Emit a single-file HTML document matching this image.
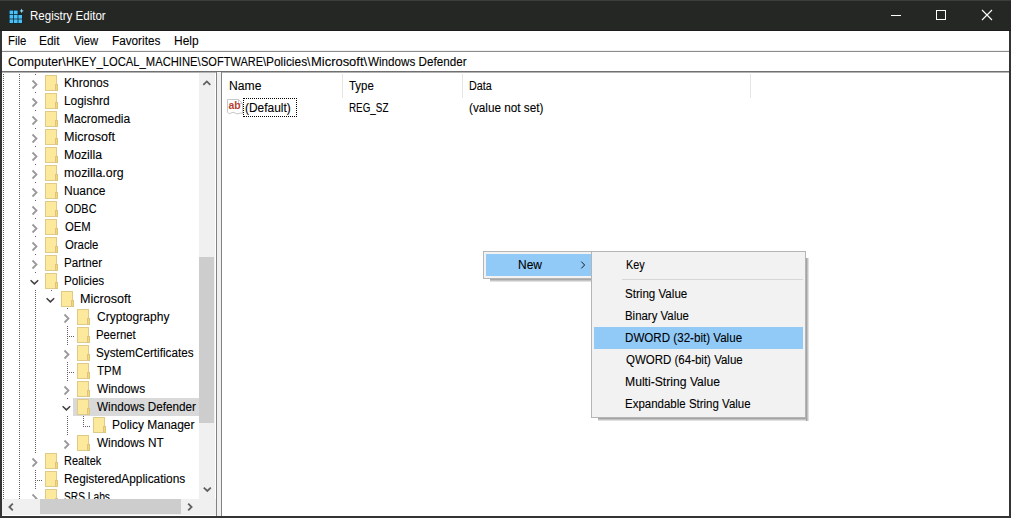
<!DOCTYPE html>
<html><head><meta charset="utf-8"><title>Registry Editor</title>
<style>
html,body{margin:0;padding:0;width:1011px;height:518px;overflow:hidden;background:#fff;font-family:"Liberation Sans",sans-serif;font-size:12.5px;color:#000}
.a{position:absolute}
.t{position:absolute;white-space:pre;line-height:18px;height:18px;-webkit-text-stroke:0.1px currentColor}
</style></head><body>
<div class="a" style="left:0px;top:0px;width:1011px;height:31px;background:#252725;"></div><div class="a" style="left:0px;top:0px;width:1011px;height:1px;background:#3c3d3c;"></div><div class="a" style="left:0px;top:30px;width:1011px;height:1px;background:#1b1c1b;"></div><svg class="a" style="left:8px;top:8px" width="18" height="18" viewBox="0 0 18 18"><rect x="1" y="2" width="13.6" height="13.6" fill="#0b2a3c"/><rect x="1.6" y="2.6" width="3.6" height="3.6" fill="#4cc0f2"/><rect x="6.0" y="2.6" width="3.6" height="3.6" fill="#4cc0f2"/><rect x="1.6" y="7.0" width="3.6" height="3.6" fill="#4cc0f2"/><rect x="6.0" y="7.0" width="3.6" height="3.6" fill="#4cc0f2"/><rect x="10.4" y="7.0" width="3.6" height="3.6" fill="#4cc0f2"/><rect x="1.6" y="11.4" width="3.6" height="3.6" fill="#4cc0f2"/><rect x="6.0" y="11.4" width="3.6" height="3.6" fill="#4cc0f2"/><rect x="10.4" y="11.4" width="3.6" height="3.6" fill="#4cc0f2"/><rect x="10.4" y="1.6" width="4.4" height="4.4" fill="#252725"/><path d="M13.6 0.6 L14.3 2.2 L15.9 2.9 L14.3 3.6 L13.6 5.2 L12.9 3.6 L11.3 2.9 L12.9 2.2 Z" fill="#8fe0ff"/></svg><div class="t" style="left:29.88px;top:7px;color:#fff;transform:scaleX(0.9235);transform-origin:0 0;-webkit-text-stroke:0;">Registry Editor</div><div class="a" style="left:891px;top:15px;width:10px;height:1px;background:#fff;"></div><div class="a" style="left:936px;top:10px;width:8px;height:8px;border:1px solid #fff"></div><svg class="a" style="left:981px;top:9px" width="12" height="12" viewBox="0 0 12 12"><path d="M1 1 L11 11 M11 1 L1 11" stroke="#fff" stroke-width="1.1"/></svg><div class="a" style="left:0px;top:31px;width:2px;height:487px;background:#333433;"></div><div class="a" style="left:1009px;top:31px;width:2px;height:487px;background:#333433;"></div><div class="a" style="left:0px;top:516px;width:1011px;height:2px;background:#333433;"></div><div class="t" style="left:7.79px;top:32px;color:#000;transform:scaleX(0.9105);transform-origin:0 0;">File</div><div class="t" style="left:39.05px;top:32px;color:#000;transform:scaleX(0.9524);transform-origin:0 0;">Edit</div><div class="t" style="left:74.40px;top:32px;color:#000;transform:scaleX(0.9037);transform-origin:0 0;">View</div><div class="t" style="left:112.06px;top:32px;color:#000;transform:scaleX(0.9400);transform-origin:0 0;">Favorites</div><div class="t" style="left:173.64px;top:32px;color:#000;transform:scaleX(0.9560);transform-origin:0 0;">Help</div><div class="a" style="left:2px;top:50px;width:1007px;height:1px;background:#f0f0f0;"></div><div class="a" style="left:2px;top:51px;width:1007px;height:1px;background:#8c8c8c;"></div><div class="t" style="left:7.90px;top:53px;color:#000;transform:scaleX(0.9864);transform-origin:0 0;">Computer\</div><div class="t" style="left:66.40px;top:53px;color:#000;transform:scaleX(0.8973);transform-origin:0 0;">HKEY_LOCAL_MACHINE\</div><div class="t" style="left:200.92px;top:53px;color:#000;transform:scaleX(0.8822);transform-origin:0 0;">SOFTWARE\</div><div class="t" style="left:266.05px;top:53px;color:#000;transform:scaleX(0.9543);transform-origin:0 0;">Policies\</div><div class="t" style="left:311.06px;top:53px;color:#000;transform:scaleX(1.0358);transform-origin:0 0;">Microsoft\</div><div class="t" style="left:367.50px;top:53px;color:#000;transform:scaleX(0.9340);transform-origin:0 0;">Windows Defender</div><div class="a" style="left:2px;top:71px;width:1007px;height:1px;background:#707070;"></div><div class="a" style="left:2px;top:72px;width:1007px;height:1px;background:#b4b4b4;"></div><div class="a" style="left:2px;top:73px;width:197px;height:426px;overflow:hidden"><div class="a" style="left:1px;top:1px;width:1px;height:425px;background:repeating-linear-gradient(#606060 0 1px,transparent 1px 2px)"></div><div class="a" style="left:17px;top:1px;width:1px;height:425px;background:repeating-linear-gradient(#606060 0 1px,transparent 1px 2px)"></div><div class="a" style="left:33px;top:1px;width:1px;height:425px;background:repeating-linear-gradient(#606060 0 1px,transparent 1px 2px)"></div><div class="a" style="left:49px;top:215px;width:1px;height:6px;background:repeating-linear-gradient(#606060 0 1px,transparent 1px 2px)"></div><div class="a" style="left:65px;top:233px;width:1px;height:138px;background:repeating-linear-gradient(#606060 0 1px,transparent 1px 2px)"></div><div class="a" style="left:81px;top:341px;width:1px;height:12px;background:repeating-linear-gradient(#606060 0 1px,transparent 1px 2px)"></div><div class="a" style="left:71px;top:325px;width:126px;height:18px;background:#d9d9d9;"></div><div class="a" style="left:32px;top:2px;width:3px;height:16px;background:#fff;"></div><svg class="a" style="left:29px;top:6px" width="8" height="11" viewBox="0 0 8 11"><path d="M1.5 1.5 L5.5 5.5 L1.5 9.5" fill="none" stroke="#9a9a9a" stroke-width="1.8"/></svg><svg class="a" style="left:43px;top:2px" width="13" height="16" viewBox="0 0 13 16"><rect x="0.5" y="0.5" width="11" height="15" fill="#fde99c" stroke="#e0ca88"/><rect x="10.5" y="9.5" width="2" height="6" fill="#f6d870" stroke="#dcc482"/></svg><div class="t" style="left:61.64px;top:1px;color:#000;transform:scaleX(0.9622);transform-origin:0 0;">Khronos</div><div class="a" style="left:32px;top:20px;width:3px;height:16px;background:#fff;"></div><svg class="a" style="left:29px;top:24px" width="8" height="11" viewBox="0 0 8 11"><path d="M1.5 1.5 L5.5 5.5 L1.5 9.5" fill="none" stroke="#9a9a9a" stroke-width="1.8"/></svg><svg class="a" style="left:43px;top:20px" width="13" height="16" viewBox="0 0 13 16"><rect x="0.5" y="0.5" width="11" height="15" fill="#fde99c" stroke="#e0ca88"/><rect x="10.5" y="9.5" width="2" height="6" fill="#f6d870" stroke="#dcc482"/></svg><div class="t" style="left:61.65px;top:19px;color:#000;transform:scaleX(0.9511);transform-origin:0 0;">Logishrd</div><div class="a" style="left:32px;top:38px;width:3px;height:16px;background:#fff;"></div><svg class="a" style="left:29px;top:42px" width="8" height="11" viewBox="0 0 8 11"><path d="M1.5 1.5 L5.5 5.5 L1.5 9.5" fill="none" stroke="#9a9a9a" stroke-width="1.8"/></svg><svg class="a" style="left:43px;top:38px" width="13" height="16" viewBox="0 0 13 16"><rect x="0.5" y="0.5" width="11" height="15" fill="#fde99c" stroke="#e0ca88"/><rect x="10.5" y="9.5" width="2" height="6" fill="#f6d870" stroke="#dcc482"/></svg><div class="t" style="left:61.64px;top:37px;color:#000;transform:scaleX(0.9632);transform-origin:0 0;">Macromedia</div><div class="a" style="left:32px;top:56px;width:3px;height:16px;background:#fff;"></div><svg class="a" style="left:29px;top:60px" width="8" height="11" viewBox="0 0 8 11"><path d="M1.5 1.5 L5.5 5.5 L1.5 9.5" fill="none" stroke="#9a9a9a" stroke-width="1.8"/></svg><svg class="a" style="left:43px;top:56px" width="13" height="16" viewBox="0 0 13 16"><rect x="0.5" y="0.5" width="11" height="15" fill="#fde99c" stroke="#e0ca88"/><rect x="10.5" y="9.5" width="2" height="6" fill="#f6d870" stroke="#dcc482"/></svg><div class="t" style="left:61.59px;top:55px;color:#000;transform:scaleX(1.0060);transform-origin:0 0;">Microsoft</div><div class="a" style="left:32px;top:74px;width:3px;height:16px;background:#fff;"></div><svg class="a" style="left:29px;top:78px" width="8" height="11" viewBox="0 0 8 11"><path d="M1.5 1.5 L5.5 5.5 L1.5 9.5" fill="none" stroke="#9a9a9a" stroke-width="1.8"/></svg><svg class="a" style="left:43px;top:74px" width="13" height="16" viewBox="0 0 13 16"><rect x="0.5" y="0.5" width="11" height="15" fill="#fde99c" stroke="#e0ca88"/><rect x="10.5" y="9.5" width="2" height="6" fill="#f6d870" stroke="#dcc482"/></svg><div class="t" style="left:61.62px;top:73px;color:#000;transform:scaleX(0.9789);transform-origin:0 0;">Mozilla</div><div class="a" style="left:32px;top:92px;width:3px;height:16px;background:#fff;"></div><svg class="a" style="left:29px;top:96px" width="8" height="11" viewBox="0 0 8 11"><path d="M1.5 1.5 L5.5 5.5 L1.5 9.5" fill="none" stroke="#9a9a9a" stroke-width="1.8"/></svg><svg class="a" style="left:43px;top:92px" width="13" height="16" viewBox="0 0 13 16"><rect x="0.5" y="0.5" width="11" height="15" fill="#fde99c" stroke="#e0ca88"/><rect x="10.5" y="9.5" width="2" height="6" fill="#f6d870" stroke="#dcc482"/></svg><div class="t" style="left:61.61px;top:91px;color:#000;transform:scaleX(0.9864);transform-origin:0 0;">mozilla.org</div><div class="a" style="left:32px;top:110px;width:3px;height:16px;background:#fff;"></div><svg class="a" style="left:29px;top:114px" width="8" height="11" viewBox="0 0 8 11"><path d="M1.5 1.5 L5.5 5.5 L1.5 9.5" fill="none" stroke="#9a9a9a" stroke-width="1.8"/></svg><svg class="a" style="left:43px;top:110px" width="13" height="16" viewBox="0 0 13 16"><rect x="0.5" y="0.5" width="11" height="15" fill="#fde99c" stroke="#e0ca88"/><rect x="10.5" y="9.5" width="2" height="6" fill="#f6d870" stroke="#dcc482"/></svg><div class="t" style="left:61.64px;top:109px;color:#000;transform:scaleX(0.9619);transform-origin:0 0;">Nuance</div><div class="a" style="left:32px;top:128px;width:3px;height:16px;background:#fff;"></div><svg class="a" style="left:29px;top:132px" width="8" height="11" viewBox="0 0 8 11"><path d="M1.5 1.5 L5.5 5.5 L1.5 9.5" fill="none" stroke="#9a9a9a" stroke-width="1.8"/></svg><svg class="a" style="left:43px;top:128px" width="13" height="16" viewBox="0 0 13 16"><rect x="0.5" y="0.5" width="11" height="15" fill="#fde99c" stroke="#e0ca88"/><rect x="10.5" y="9.5" width="2" height="6" fill="#f6d870" stroke="#dcc482"/></svg><div class="t" style="left:62.60px;top:127px;color:#000;transform:scaleX(0.8722);transform-origin:0 0;">ODBC</div><div class="a" style="left:32px;top:146px;width:3px;height:16px;background:#fff;"></div><svg class="a" style="left:29px;top:150px" width="8" height="11" viewBox="0 0 8 11"><path d="M1.5 1.5 L5.5 5.5 L1.5 9.5" fill="none" stroke="#9a9a9a" stroke-width="1.8"/></svg><svg class="a" style="left:43px;top:146px" width="13" height="16" viewBox="0 0 13 16"><rect x="0.5" y="0.5" width="11" height="15" fill="#fde99c" stroke="#e0ca88"/><rect x="10.5" y="9.5" width="2" height="6" fill="#f6d870" stroke="#dcc482"/></svg><div class="t" style="left:62.60px;top:145px;color:#000;transform:scaleX(0.9036);transform-origin:0 0;">OEM</div><div class="a" style="left:32px;top:164px;width:3px;height:16px;background:#fff;"></div><svg class="a" style="left:29px;top:168px" width="8" height="11" viewBox="0 0 8 11"><path d="M1.5 1.5 L5.5 5.5 L1.5 9.5" fill="none" stroke="#9a9a9a" stroke-width="1.8"/></svg><svg class="a" style="left:43px;top:164px" width="13" height="16" viewBox="0 0 13 16"><rect x="0.5" y="0.5" width="11" height="15" fill="#fde99c" stroke="#e0ca88"/><rect x="10.5" y="9.5" width="2" height="6" fill="#f6d870" stroke="#dcc482"/></svg><div class="t" style="left:62.60px;top:163px;color:#000;transform:scaleX(0.9081);transform-origin:0 0;">Oracle</div><div class="a" style="left:32px;top:182px;width:3px;height:16px;background:#fff;"></div><svg class="a" style="left:29px;top:186px" width="8" height="11" viewBox="0 0 8 11"><path d="M1.5 1.5 L5.5 5.5 L1.5 9.5" fill="none" stroke="#9a9a9a" stroke-width="1.8"/></svg><svg class="a" style="left:43px;top:182px" width="13" height="16" viewBox="0 0 13 16"><rect x="0.5" y="0.5" width="11" height="15" fill="#fde99c" stroke="#e0ca88"/><rect x="10.5" y="9.5" width="2" height="6" fill="#f6d870" stroke="#dcc482"/></svg><div class="t" style="left:61.67px;top:181px;color:#000;transform:scaleX(0.9300);transform-origin:0 0;">Partner</div><div class="a" style="left:32px;top:200px;width:3px;height:16px;background:#fff;"></div><svg class="a" style="left:27px;top:205px" width="11" height="8" viewBox="0 0 11 8"><path d="M1.6 2.2 L5.4 5.9 L9.2 2.2" fill="none" stroke="#404040" stroke-width="1.5"/></svg><svg class="a" style="left:43px;top:200px" width="13" height="16" viewBox="0 0 13 16"><rect x="0.5" y="0.5" width="11" height="15" fill="#fde99c" stroke="#e0ca88"/><rect x="10.5" y="9.5" width="2" height="6" fill="#f6d870" stroke="#dcc482"/></svg><div class="t" style="left:61.67px;top:199px;color:#000;transform:scaleX(0.9333);transform-origin:0 0;">Policies</div><div class="a" style="left:48px;top:218px;width:3px;height:16px;background:#fff;"></div><svg class="a" style="left:43px;top:223px" width="11" height="8" viewBox="0 0 11 8"><path d="M1.6 2.2 L5.4 5.9 L9.2 2.2" fill="none" stroke="#404040" stroke-width="1.5"/></svg><svg class="a" style="left:59px;top:218px" width="13" height="16" viewBox="0 0 13 16"><rect x="0.5" y="0.5" width="11" height="15" fill="#fde99c" stroke="#e0ca88"/><rect x="10.5" y="9.5" width="2" height="6" fill="#f6d870" stroke="#dcc482"/></svg><div class="t" style="left:77.59px;top:217px;color:#000;transform:scaleX(1.0080);transform-origin:0 0;">Microsoft</div><div class="a" style="left:64px;top:236px;width:3px;height:16px;background:#fff;"></div><svg class="a" style="left:61px;top:240px" width="8" height="11" viewBox="0 0 8 11"><path d="M1.5 1.5 L5.5 5.5 L1.5 9.5" fill="none" stroke="#9a9a9a" stroke-width="1.8"/></svg><svg class="a" style="left:75px;top:236px" width="13" height="16" viewBox="0 0 13 16"><rect x="0.5" y="0.5" width="11" height="15" fill="#fde99c" stroke="#e0ca88"/><rect x="10.5" y="9.5" width="2" height="6" fill="#f6d870" stroke="#dcc482"/></svg><div class="t" style="left:94.60px;top:235px;color:#000;transform:scaleX(0.9653);transform-origin:0 0;">Cryptography</div><div class="a" style="left:65px;top:263px;width:8px;height:1px;background:repeating-linear-gradient(90deg,#606060 0 1px,transparent 1px 2px)"></div><svg class="a" style="left:75px;top:254px" width="13" height="16" viewBox="0 0 13 16"><rect x="0.5" y="0.5" width="11" height="15" fill="#fde99c" stroke="#e0ca88"/><rect x="10.5" y="9.5" width="2" height="6" fill="#f6d870" stroke="#dcc482"/></svg><div class="t" style="left:93.69px;top:253px;color:#000;transform:scaleX(0.9070);transform-origin:0 0;">Peernet</div><div class="a" style="left:64px;top:272px;width:3px;height:16px;background:#fff;"></div><svg class="a" style="left:61px;top:276px" width="8" height="11" viewBox="0 0 8 11"><path d="M1.5 1.5 L5.5 5.5 L1.5 9.5" fill="none" stroke="#9a9a9a" stroke-width="1.8"/></svg><svg class="a" style="left:75px;top:272px" width="13" height="16" viewBox="0 0 13 16"><rect x="0.5" y="0.5" width="11" height="15" fill="#fde99c" stroke="#e0ca88"/><rect x="10.5" y="9.5" width="2" height="6" fill="#f6d870" stroke="#dcc482"/></svg><div class="t" style="left:93.66px;top:271px;color:#000;transform:scaleX(0.9359);transform-origin:0 0;">SystemCertificates</div><div class="a" style="left:65px;top:299px;width:8px;height:1px;background:repeating-linear-gradient(90deg,#606060 0 1px,transparent 1px 2px)"></div><svg class="a" style="left:75px;top:290px" width="13" height="16" viewBox="0 0 13 16"><rect x="0.5" y="0.5" width="11" height="15" fill="#fde99c" stroke="#e0ca88"/><rect x="10.5" y="9.5" width="2" height="6" fill="#f6d870" stroke="#dcc482"/></svg><div class="t" style="left:94.60px;top:289px;color:#000;transform:scaleX(0.9192);transform-origin:0 0;">TPM</div><div class="a" style="left:64px;top:308px;width:3px;height:16px;background:#fff;"></div><svg class="a" style="left:61px;top:312px" width="8" height="11" viewBox="0 0 8 11"><path d="M1.5 1.5 L5.5 5.5 L1.5 9.5" fill="none" stroke="#9a9a9a" stroke-width="1.8"/></svg><svg class="a" style="left:75px;top:308px" width="13" height="16" viewBox="0 0 13 16"><rect x="0.5" y="0.5" width="11" height="15" fill="#fde99c" stroke="#e0ca88"/><rect x="10.5" y="9.5" width="2" height="6" fill="#f6d870" stroke="#dcc482"/></svg><div class="t" style="left:94.60px;top:307px;color:#000;transform:scaleX(0.9490);transform-origin:0 0;">Windows</div><div class="a" style="left:64px;top:326px;width:3px;height:16px;background:#fff;"></div><svg class="a" style="left:59px;top:331px" width="11" height="8" viewBox="0 0 11 8"><path d="M1.6 2.2 L5.4 5.9 L9.2 2.2" fill="none" stroke="#404040" stroke-width="1.5"/></svg><svg class="a" style="left:75px;top:326px" width="13" height="16" viewBox="0 0 13 16"><rect x="0.5" y="0.5" width="11" height="15" fill="#fde99c" stroke="#e0ca88"/><rect x="10.5" y="9.5" width="2" height="6" fill="#f6d870" stroke="#dcc482"/></svg><div class="t" style="left:94.60px;top:325px;color:#000;transform:scaleX(0.9377);transform-origin:0 0;">Windows Defender</div><div class="a" style="left:81px;top:353px;width:8px;height:1px;background:repeating-linear-gradient(90deg,#606060 0 1px,transparent 1px 2px)"></div><svg class="a" style="left:91px;top:344px" width="13" height="16" viewBox="0 0 13 16"><rect x="0.5" y="0.5" width="11" height="15" fill="#fde99c" stroke="#e0ca88"/><rect x="10.5" y="9.5" width="2" height="6" fill="#f6d870" stroke="#dcc482"/></svg><div class="t" style="left:109.64px;top:343px;color:#000;transform:scaleX(0.9576);transform-origin:0 0;">Policy Manager</div><div class="a" style="left:64px;top:362px;width:3px;height:16px;background:#fff;"></div><svg class="a" style="left:61px;top:366px" width="8" height="11" viewBox="0 0 8 11"><path d="M1.5 1.5 L5.5 5.5 L1.5 9.5" fill="none" stroke="#9a9a9a" stroke-width="1.8"/></svg><svg class="a" style="left:75px;top:362px" width="13" height="16" viewBox="0 0 13 16"><rect x="0.5" y="0.5" width="11" height="15" fill="#fde99c" stroke="#e0ca88"/><rect x="10.5" y="9.5" width="2" height="6" fill="#f6d870" stroke="#dcc482"/></svg><div class="t" style="left:94.60px;top:361px;color:#000;transform:scaleX(0.9408);transform-origin:0 0;">Windows NT</div><div class="a" style="left:32px;top:380px;width:3px;height:16px;background:#fff;"></div><svg class="a" style="left:29px;top:384px" width="8" height="11" viewBox="0 0 8 11"><path d="M1.5 1.5 L5.5 5.5 L1.5 9.5" fill="none" stroke="#9a9a9a" stroke-width="1.8"/></svg><svg class="a" style="left:43px;top:380px" width="13" height="16" viewBox="0 0 13 16"><rect x="0.5" y="0.5" width="11" height="15" fill="#fde99c" stroke="#e0ca88"/><rect x="10.5" y="9.5" width="2" height="6" fill="#f6d870" stroke="#dcc482"/></svg><div class="t" style="left:61.72px;top:379px;color:#000;transform:scaleX(0.8786);transform-origin:0 0;">Realtek</div><div class="a" style="left:33px;top:407px;width:8px;height:1px;background:repeating-linear-gradient(90deg,#606060 0 1px,transparent 1px 2px)"></div><svg class="a" style="left:43px;top:398px" width="13" height="16" viewBox="0 0 13 16"><rect x="0.5" y="0.5" width="11" height="15" fill="#fde99c" stroke="#e0ca88"/><rect x="10.5" y="9.5" width="2" height="6" fill="#f6d870" stroke="#dcc482"/></svg><div class="t" style="left:61.65px;top:397px;color:#000;transform:scaleX(0.9480);transform-origin:0 0;">RegisteredApplications</div><div class="a" style="left:32px;top:416px;width:3px;height:16px;background:#fff;"></div><svg class="a" style="left:29px;top:420px" width="8" height="11" viewBox="0 0 8 11"><path d="M1.5 1.5 L5.5 5.5 L1.5 9.5" fill="none" stroke="#9a9a9a" stroke-width="1.8"/></svg><svg class="a" style="left:43px;top:416px" width="13" height="16" viewBox="0 0 13 16"><rect x="0.5" y="0.5" width="11" height="15" fill="#fde99c" stroke="#e0ca88"/><rect x="10.5" y="9.5" width="2" height="6" fill="#f6d870" stroke="#dcc482"/></svg><div class="t" style="left:61.78px;top:415px;color:#000;transform:scaleX(0.8164);transform-origin:0 0;">SRS Labs</div></div><div class="a" style="left:199px;top:73px;width:16px;height:426px;background:#f0f0f0;"></div><div class="a" style="left:199px;top:257px;width:15px;height:166px;background:#cdcdcd;"></div><svg class="a" style="left:201px;top:77px" width="12" height="10" viewBox="0 0 12 10"><path d="M2.3 7.8 L5.8 4.4 L9.3 7.8" fill="none" stroke="#606060" stroke-width="1.8"/></svg><svg class="a" style="left:201px;top:484px" width="12" height="10" viewBox="0 0 12 10"><path d="M2.8 3.6 L6.3 7 L9.8 3.6" fill="none" stroke="#606060" stroke-width="1.8"/></svg><div class="a" style="left:215px;top:73px;width:1px;height:443px;background:#fff;"></div><div class="a" style="left:2px;top:499px;width:214px;height:16px;background:#f0f0f0;"></div><div class="a" style="left:40px;top:499px;width:141px;height:15px;background:#cdcdcd;"></div><svg class="a" style="left:6px;top:501px" width="10" height="12" viewBox="0 0 10 12"><path d="M6.8 2.6 L3.4 6 L6.8 9.4" fill="none" stroke="#606060" stroke-width="1.8"/></svg><svg class="a" style="left:185px;top:501px" width="10" height="12" viewBox="0 0 10 12"><path d="M3.2 2.6 L6.6 6 L3.2 9.4" fill="none" stroke="#606060" stroke-width="1.8"/></svg><div class="a" style="left:2px;top:515px;width:214px;height:1px;background:#fff;"></div><div class="a" style="left:216px;top:72px;width:1px;height:444px;background:#828282;"></div><div class="a" style="left:217px;top:72px;width:4px;height:444px;background:#f0f0f0;"></div><div class="a" style="left:221px;top:72px;width:1px;height:444px;background:#828282;"></div><div class="a" style="left:342px;top:74px;width:1px;height:24px;background:#e5e5e5;"></div><div class="a" style="left:462px;top:74px;width:1px;height:24px;background:#e5e5e5;"></div><div class="a" style="left:750px;top:74px;width:1px;height:24px;background:#e5e5e5;"></div><div class="t" style="left:228.73px;top:77px;color:#000;transform:scaleX(0.9719);transform-origin:0 0;">Name</div><div class="t" style="left:349.30px;top:77px;color:#000;transform:scaleX(0.9148);transform-origin:0 0;">Type</div><div class="t" style="left:468.84px;top:77px;color:#000;transform:scaleX(0.8615);transform-origin:0 0;">Data</div><svg class="a" style="left:227px;top:99px" width="17" height="17" viewBox="0 0 17 17"><path d="M0.5 0.5 H11.5 L15.5 4.5 V14.5 Q14 13.5 12 14.5 Q10 15.5 8 14 Q6 12.5 4 14 Q2 15.5 0.5 13.5 Z" fill="#fff" stroke="#c8c8c8"/><path d="M11.5 0.5 V4.5 H15.5" fill="none" stroke="#c8c8c8"/><text x="1.6" y="10.2" font-family="Liberation Sans" font-weight="bold" font-size="10.4" fill="#b5412f">ab</text></svg><div class="a" style="left:243px;top:98px;width:52px;height:17px;border:1px dotted #000"></div><div class="t" style="left:244.65px;top:99px;color:#000;transform:scaleX(0.9532);transform-origin:0 0;">(Default)</div><div class="t" style="left:348.51px;top:99px;color:#000;transform:scaleX(0.7878);transform-origin:0 0;">REG_SZ</div><div class="t" style="left:468.76px;top:99px;color:#000;transform:scaleX(0.9397);transform-origin:0 0;">(value not set)</div><div class="a" style="left:490px;top:279px;width:101px;height:3px;background:linear-gradient(rgba(0,0,0,0.4),rgba(0,0,0,0.06))"></div><div class="a" style="left:483px;top:251px;width:110px;height:28px;background:#f2f2f2;box-sizing:border-box;border:1px solid #b5b5b5"></div><div class="a" style="left:486px;top:254px;width:106px;height:22px;background:#91c9f7;"></div><div class="t" style="left:517.84px;top:256px;color:#000;transform:scaleX(0.9583);transform-origin:0 0;">New</div><svg class="a" style="left:579px;top:260px" width="8" height="10" viewBox="0 0 8 10"><path d="M2.3 1.6 L5.6 5 L2.3 8.4" fill="none" stroke="#1a1a1a" stroke-width="1"/></svg><div class="a" style="left:806px;top:258px;width:3px;height:163px;background:linear-gradient(90deg,rgba(0,0,0,0.42),rgba(0,0,0,0.06))"></div><div class="a" style="left:598px;top:418px;width:208px;height:3px;background:linear-gradient(rgba(0,0,0,0.42),rgba(0,0,0,0.06))"></div><div class="a" style="left:591px;top:251px;width:215px;height:167px;background:#f2f2f2;box-sizing:border-box;border:1px solid #b5b5b5"></div><div class="a" style="left:622px;top:279px;width:181px;height:1px;background:#d7d7d7;"></div><div class="a" style="left:594px;top:327px;width:209px;height:22px;background:#91c9f7;"></div><div class="t" style="left:625.53px;top:256px;color:#000;transform:scaleX(0.8667);transform-origin:0 0;">Key</div><div class="t" style="left:625.47px;top:285px;color:#000;transform:scaleX(0.9273);transform-origin:0 0;">String Value</div><div class="t" style="left:625.49px;top:307px;color:#000;transform:scaleX(0.9130);transform-origin:0 0;">Binary Value</div><div class="t" style="left:625.47px;top:329px;color:#000;transform:scaleX(0.9280);transform-origin:0 0;">DWORD (32-bit) Value</div><div class="t" style="left:626.40px;top:351px;color:#000;transform:scaleX(0.9197);transform-origin:0 0;">QWORD (64-bit) Value</div><div class="t" style="left:625.43px;top:373px;color:#000;transform:scaleX(0.9732);transform-origin:0 0;">Multi-String Value</div><div class="t" style="left:625.48px;top:395px;color:#000;transform:scaleX(0.9191);transform-origin:0 0;">Expandable String Value</div>
</body></html>
